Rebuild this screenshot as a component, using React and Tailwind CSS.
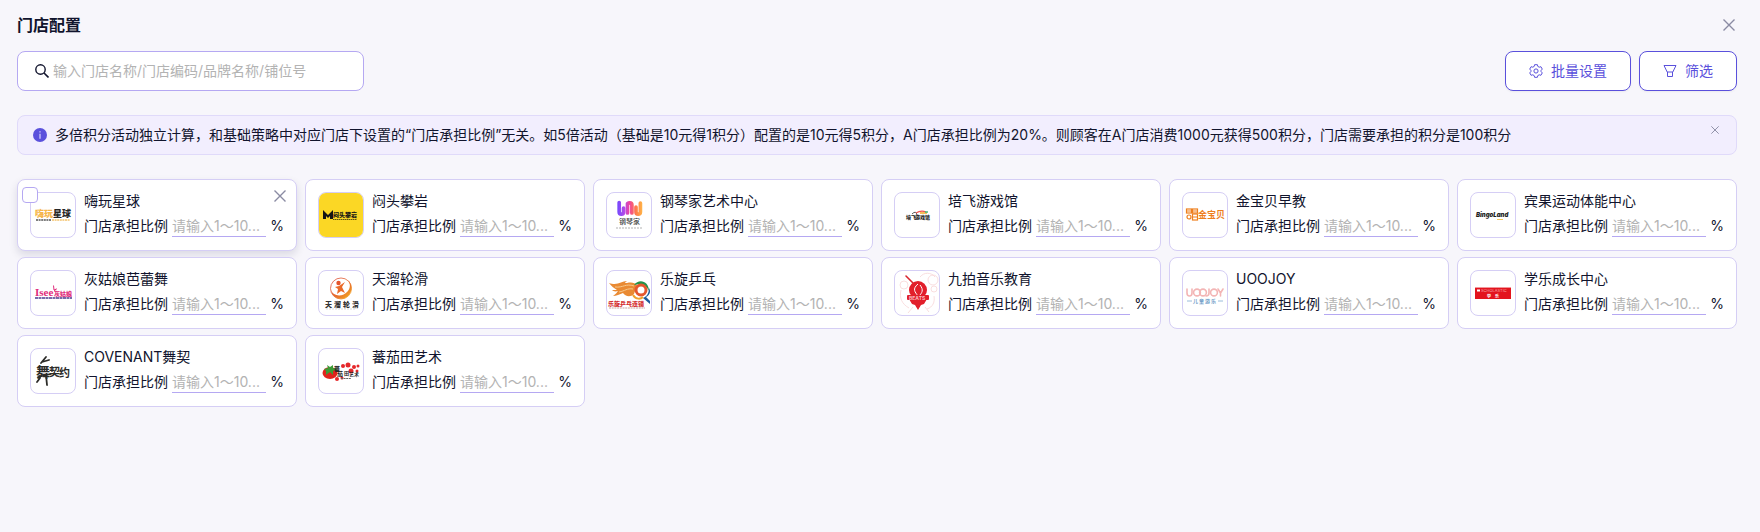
import { useState } from 'react';

const HiPlanetLogo = () => (
  <svg viewBox="0 0 44 44" className="size-full" aria-hidden="true">
    <g fontSize="9" fontWeight="900">
      <text x="4" y="24" fill="#f6b64a">嗨玩</text>
      <text x="22" y="24" fill="#262626">星球</text>
    </g>
    <path d="M5 27h15" stroke="#555" strokeWidth="1.5" strokeDasharray="2 .6" />
    <path d="M21 27h18" stroke="#f3c26b" strokeWidth="1.5" strokeDasharray="2 .6" />
  </svg>
);

const ClimbingLogo = () => (
  <svg viewBox="0 0 44 44" className="size-full bg-[#fbd725]" aria-hidden="true">
    <path d="M4 26V17l5 5 5-5v9h-3v-3l-2 2-2-2v3z" fill="#151515" />
    <text x="14" y="24" fontSize="6" fontWeight="900" fill="#151515">闷头攀岩</text>
    <path d="M14 26.5h24" stroke="#5d5312" strokeWidth="1.2" strokeDasharray="1.5 .5" />
  </svg>
);

const PianoLogo = () => (
  <svg viewBox="0 0 44 44" className="size-full" aria-hidden="true">
    <defs>
      <linearGradient id="piano" x1="10" x2="35" y1="0" y2="0" gradientUnits="userSpaceOnUse">
        <stop offset="0" stopColor="#7048ff" />
        <stop offset=".3" stopColor="#b44be8" />
        <stop offset=".5" stopColor="#f0449b" />
        <stop offset=".75" stopColor="#ff7a4a" />
        <stop offset="1" stopColor="#ffb347" />
      </linearGradient>
    </defs>
    <g fill="none" stroke="url(#piano)" strokeWidth="3.700" strokeLinecap="round">
      <path d="M12.200 9.500v9.500a2 2 0 0 0 4.400 0v-4" />
      <path d="M20.500 20v-9.500M20.500 12a2 2 0 0 1 4.400 0v8" />
      <path d="M29 14v5a2 2 0 0 0 4.400 0v-9" />
    </g>
    <text x="12" y="31" fontSize="7" fontWeight="500" fill="#444">钢琴家</text>
    <path d="M9 35h27" stroke="#ccc" strokeWidth="1.600" strokeDasharray="2 1" />
  </svg>
);

const PeifeiLogo = () => (
  <svg viewBox="0 0 44 44" className="size-full" aria-hidden="true">
    <path d="M17 21q4-4 5 1" fill="none" stroke="#555" />
    <path d="M21 20q5-3 10-1" fill="none" stroke="#ef5350" strokeWidth="1.300" />
    <path d="M25 20h7" stroke="#f5a623" strokeWidth="1.300" />
    <path d="M30 19h3" stroke="#45b97c" strokeWidth="1.300" />
    <text x="11" y="26" fontSize="5" fontWeight="900" fill="#222">培飞</text>
    <text x="20" y="26" fontSize="5" fontWeight="900" fill="#222">游戏馆</text>
  </svg>
);

const GymboreeLogo = () => (
  <svg viewBox="0 0 44 44" className="size-full" aria-hidden="true">
    <g fill="none" stroke="#ee7f1d" strokeWidth="1.200">
      <rect x="3.500" y="16" width="5" height="4" />
      <rect x="9.500" y="16" width="5" height="4" />
      <circle cx="6" cy="24" r="2" />
      <rect x="9.500" y="21" width="5" height="6" />
      <path d="M4 18h11M10 24h4" />
    </g>
    <text x="15" y="25" fontSize="9" fontWeight="700" fill="#ee7f1d">金宝贝</text>
  </svg>
);

const BingoLogo = () => (
  <svg viewBox="0 0 44 44" className="size-full" aria-hidden="true">
    <text x="5" y="24" fontSize="6" fontWeight="900" fontStyle="italic" fill="#1d1d1d">BingoLand</text>
    <path d="M26 26.500h6" stroke="#f4c95b" strokeWidth="1.200" />
  </svg>
);

const CinderellaLogo = () => (
  <svg viewBox="0 0 44 44" className="size-full" aria-hidden="true">
    <text x="4" y="25" fontSize="11" fontWeight="700" fill="#df2d7c" fontFamily="Liberation Serif, serif">Isee</text>
    <path d="M22.500 14.500l.5 4.500 2.500-1-2.500 2" fill="none" stroke="#df2d7c" strokeWidth="1" />
    <text x="23" y="25" fontSize="6" fontWeight="900" fill="#df2d7c">灰姑娘</text>
    <path d="M4 27h37" stroke="#4b3b8f" strokeWidth="1.600" strokeDasharray="3 .5" />
  </svg>
);

const SkatingLogo = () => (
  <svg viewBox="0 0 44 44" className="size-full" aria-hidden="true">
    <defs>
      <linearGradient id="skate" x1="0" x2="1" y1="0" y2="1">
        <stop offset="0" stopColor="#d9463b" />
        <stop offset=".6" stopColor="#e8732c" />
        <stop offset="1" stopColor="#f6b91e" />
      </linearGradient>
    </defs>
    <circle cx="22" cy="17.500" r="10.500" fill="none" stroke="url(#skate)" strokeWidth=".8" />
    <path d="M12 19c2 6 11 8 17 1 3-4 2-8 0-11 4 4 5 10 1 15-6 7-17 4-18-5z" fill="url(#skate)" />
    <circle cx="19.500" cy="12" r="2.200" fill="#e5542b" />
    <path d="M16 16l4-1 6-4-3 5 3 6-4-2-4 3 1-5z" fill="#ea6a29" />
    <text x="6" y="36" fontSize="7" fontWeight="900" fill="#333">天</text>
    <text x="15" y="36" fontSize="7" fontWeight="900" fill="#333">溜</text>
    <text x="24" y="36" fontSize="7" fontWeight="900" fill="#333">轮</text>
    <text x="33" y="36" fontSize="7" fontWeight="900" fill="#333">滑</text>
    <path d="M7 38h30" stroke="#ccc" strokeWidth=".7" strokeDasharray="2 1" />
  </svg>
);

const PingpongLogo = () => (
  <svg viewBox="0 0 44 44" className="size-full" aria-hidden="true">
    <path d="M2 12c9 3 12-2 18-2-3 2-2 2 0 2 5-1 8 0 10 2l-3 9c-4 4-9 2-11-1-3 1-7 3-10 3 3-2 4-4 5-5-3 1-5 0-6-1h5c-3-2-6-4-8-7z" fill="#e98a33" />
    <path d="M8 16c8 1 11-4 19-1M12 21c6-1 8-4 14-3" fill="none" stroke="#f7c98c" strokeWidth="1" />
    <path d="M27 14c5-7 15-4 15 6-3-6-7-8-15-6z" fill="#23924b" />
    <path d="M42 17c0 6-3 9-6 10l7 6v-3l-4-4c4-2 5-6 3-9z" fill="#1d5c9c" />
    <circle cx="34" cy="19" r="5" fill="none" stroke="#e4572e" strokeWidth="3" />
    <circle cx="34" cy="19" r="2.300" fill="#fff" />
    <path d="M26 24c3 5 8 4 10 2" fill="none" stroke="#f0a12c" strokeWidth="2" />
    <text x="1" y="35" fontSize="6" fontWeight="900" fill="#d42f2f">乐旋乒乓连锁</text>
    <path d="M2 37h36" stroke="#c9a5a0" strokeWidth="1.200" strokeDasharray="2 .7" />
  </svg>
);

const BeatsLogo = () => (
  <svg viewBox="0 0 44 44" className="size-full" aria-hidden="true">
    <g fill="none" stroke="#f8d5d7" strokeWidth=".8">
      <circle cx="9" cy="14" r="4" />
      <circle cx="38" cy="9" r="5" />
      <circle cx="39" cy="18" r="3" />
      <path d="M25 6c4-5 11-5 15 0M6 19c-2 8 1 14 8 18M32 38c6-2 8-7 7-13M13 42l5-6M34 41l-4-5" />
    </g>
    <path d="M11 5l8 8" stroke="#d9252e" strokeWidth="1.600" strokeLinecap="round" />
    <circle cx="23" cy="19" r="9" fill="#e21f2b" />
    <path d="M14 28h18l-3 5-3 1-3 5-3-5-3-1z" fill="#e21f2b" />
    <path d="M23 13c-6 5-3 8 0 12M25 14c4 5 2 8-1 11" fill="none" stroke="#fff" strokeWidth="1" />
    <rect x="12" y="24" width="22" height="5" rx="1" fill="#e21f2b" />
    <text x="14" y="29" fontSize="5" fontWeight="700" fill="#f9b9bd">BEATS</text>
  </svg>
);

const UoojoyLogo = () => (
  <svg viewBox="0 0 44 44" className="size-full" aria-hidden="true">
    <g fill="none" stroke="#f3b5b5" strokeWidth="1.600" strokeLinecap="round" strokeLinejoin="round">
      <path d="M4 18v4q0 3 2.500 3T9 22v-4" />
      <circle cx="14" cy="21.500" r="3.400" />
      <circle cx="20" cy="21.500" r="3.400" />
      <path d="M26 18v4q0 3-3 3" />
      <circle cx="31" cy="21.500" r="3.400" />
      <path d="M35 18l2.500 4 2.500-4M37.500 22v3" />
    </g>
    <path d="M4 30h5M35 30h5" stroke="#8fb4d6" strokeWidth=".9" />
    <text x="10" y="32" fontSize="5" fontWeight="700" fill="#6d9bc6">儿</text>
    <text x="16" y="32" fontSize="5" fontWeight="700" fill="#6d9bc6">童</text>
    <text x="22" y="32" fontSize="5" fontWeight="700" fill="#6d9bc6">游</text>
    <text x="28" y="32" fontSize="5" fontWeight="700" fill="#6d9bc6">乐</text>
  </svg>
);

const ScholasticLogo = () => (
  <svg viewBox="0 0 44 44" className="size-full" aria-hidden="true">
    <rect x="4" y="16" width="36" height="12" fill="#e3141e" />
    <path d="M4 16.500h36" stroke="#f3979b" />
    <path d="M6 18.500h3v2H6z" fill="#fff" />
    <text x="10" y="21" fontSize="4" fill="#f6a9ac">SCHOLASTIC</text>
    <text x="16" y="27" fontSize="4" fontWeight="700" fill="#fff">学</text>
    <text x="24" y="27" fontSize="4" fontWeight="700" fill="#fff">乐</text>
  </svg>
);

const CovenantLogo = () => (
  <svg viewBox="0 0 44 44" className="size-full" aria-hidden="true">
    <g fill="none" stroke="#2b2b28" strokeLinecap="round">
      <path d="M15 8l-5 6M11 13l7-2" strokeWidth="1.800" />
      <path d="M7 28l13-3" strokeWidth="1.500" />
      <path d="M15 26l1 10M9 29l-3 4" strokeWidth="1.800" />
    </g>
    <g fill="#2b2b28" fontWeight="700">
      <text x="5" y="28" fontSize="14">舞</text>
      <text x="18" y="27" fontSize="11">契</text>
      <text x="28" y="28" fontSize="11">约</text>
    </g>
  </svg>
);

const TomatoLogo = () => (
  <svg viewBox="0 0 44 44" className="size-full" aria-hidden="true">
    <ellipse cx="11" cy="24" rx="7.500" ry="6" fill="#e0231c" />
    <path d="M5 20l4-1-1-3 3 2 3-2v3l5 1-5 2v4l-3-3-4 3v-4z" fill="#3c9a35" />
    <g fill="#e5282a">
      <circle cx="24" cy="17" r="2" />
      <circle cx="29" cy="16" r="2.500" />
      <circle cx="35" cy="18" r="2" />
      <circle cx="39" cy="17" r="1.500" />
      <circle cx="32" cy="22" r="2.500" />
      <circle cx="38" cy="22" r="1.500" />
      <circle cx="18" cy="30" r="2" />
      <circle cx="23" cy="29" r="1.500" />
    </g>
    <text x="15" y="22" fontSize="6" fontWeight="700" fill="#222">蕃</text>
    <text x="18" y="27" fontSize="6" fontWeight="700" fill="#222">茄</text>
    <text x="25" y="26" fontSize="5" fontWeight="700" fill="#222">田</text>
    <text x="30" y="27" fontSize="5" fontWeight="700" fill="#222">艺术</text>
    <path d="M22 29.500h10" stroke="#666" strokeWidth="1" strokeDasharray="2 .6" />
  </svg>
);

const stores = [
  { id: 1, name: '嗨玩星球', Logo: HiPlanetLogo },
  { id: 2, name: '闷头攀岩', Logo: ClimbingLogo },
  { id: 3, name: '钢琴家艺术中心', Logo: PianoLogo },
  { id: 4, name: '培飞游戏馆', Logo: PeifeiLogo },
  { id: 5, name: '金宝贝早教', Logo: GymboreeLogo },
  { id: 6, name: '宾果运动体能中心', Logo: BingoLogo },
  { id: 7, name: '灰姑娘芭蕾舞', Logo: CinderellaLogo },
  { id: 8, name: '天溜轮滑', Logo: SkatingLogo },
  { id: 9, name: '乐旋乒乓', Logo: PingpongLogo },
  { id: 10, name: '九拍音乐教育', Logo: BeatsLogo },
  { id: 11, name: 'UOOJOY', Logo: UoojoyLogo },
  { id: 12, name: '学乐成长中心', Logo: ScholasticLogo },
  { id: 13, name: 'COVENANT舞契', Logo: CovenantLogo },
  { id: 14, name: '蕃茄田艺术', Logo: TomatoLogo },
];

const CloseIcon = ({ className }) => (
  <svg viewBox="0 0 12 12" className={className} fill="none" stroke="currentColor" aria-hidden="true">
    <path d="M.5.5l11 11M11.500.5l-11 11" strokeWidth="1.400" />
  </svg>
);

const SearchIcon = () => (
  <svg viewBox="0 0 14 14" className="size-3.5 shrink-0" fill="none" stroke="#11142d" aria-hidden="true">
    <circle cx="5.500" cy="5.500" r="4.700" strokeWidth="1.400" />
    <path d="M9 9l4.500 4.500" strokeWidth="1.600" />
  </svg>
);

const GearIcon = () => (
  <svg viewBox="0 0 14 14" className="size-3.5" fill="none" stroke="currentColor" strokeLinejoin="round" aria-hidden="true">
    <path d="M5.600.7h2.800l.4 1.700 1.400.8 1.700-.5 1.400 2.400-1.200 1.200v1.400l1.200 1.200-1.400 2.400-1.700-.5-1.400.8-.4 1.700H5.600l-.4-1.700-1.400-.8-1.700.5L.7 8.900l1.200-1.200V6.300L.7 5.100l1.400-2.400 1.700.5 1.400-.8z" />
    <circle cx="7" cy="7" r="2.100" />
  </svg>
);

const FilterIcon = () => (
  <svg viewBox="0 0 14 14" className="size-3.5" fill="none" stroke="currentColor" strokeLinejoin="round" aria-hidden="true">
    <path d="M1 1.500h12L9.800 8H4.200z" />
    <path d="M4.500 8v4.500h5V8" />
  </svg>
);

const InfoIcon = () => (
  <svg viewBox="0 0 14 14" className="size-3.5 shrink-0" aria-hidden="true">
    <circle cx="7" cy="7" r="7" fill="#5a50dc" />
    <path d="M7 3.200v1.300M7 5.800v5" stroke="#d8d3ff" strokeWidth="1.200" />
  </svg>
);

const StoreCard = ({ store, active }) => {
  const { id, name, Logo } = store;

  return (
    <li
      className={`relative flex rounded-lg border border-[#d5cef5] bg-white p-3 ${
        active ? 'shadow-[0_4px_8px_rgba(20,15,60,0.12)]' : ''
      }`}
    >
      <div className="size-[46px] shrink-0 overflow-hidden rounded-lg border border-[#d5cef5] bg-white">
        <Logo />
      </div>
      <div className="ml-2 min-w-0 flex-1">
        <p className="truncate leading-[18px]">{name}</p>
        <div className="mt-1 flex items-center">
          <label htmlFor={`ratio-${id}`} className="shrink-0">门店承担比例</label>
          <input
            id={`ratio-${id}`}
            type="text"
            placeholder="请输入1～10..."
            className="ml-1 h-[23px] min-w-0 flex-1 border-b border-[#b5a8f2] bg-transparent outline-none placeholder:text-[#b3b3b3]"
          />
          <span className="ml-1">%</span>
        </div>
      </div>
      {active && (
        <>
          <input
            type="checkbox"
            aria-label={name}
            className="absolute top-[7px] left-1 size-4 appearance-none rounded-sm border border-[#b5a8f2] bg-white checked:bg-[#5a50dc]"
          />
          <button type="button" aria-label="移除" className="absolute top-2.5 right-2.5 text-[#8a8ba3]">
            <CloseIcon className="size-3" />
          </button>
        </>
      )}
    </li>
  );
};

const App = () => {
  const [keyword, setKeyword] = useState('');
  const [showTip, setShowTip] = useState(true);

  const visible = stores.filter((store) => store.name.includes(keyword));

  return (
    <main className="min-h-screen bg-[#f7f6fb] pt-3 pr-[23px] pb-6 pl-[17px] font-[Inter,'Noto_Sans_CJK_SC',sans-serif] text-sm text-[#11142d]">
      <header className="flex h-[26px] items-center justify-between">
        <h1 className="text-base font-semibold">门店配置</h1>
        <button type="button" aria-label="关闭" className="mr-0.5 text-[#8a8ba3]">
          <CloseIcon className="size-3" />
        </button>
      </header>

      <div className="mt-[13px] flex items-center justify-between">
        <label className="flex h-10 w-[347px] items-center gap-1 rounded-lg border border-[#b5a8f2] bg-white px-[17px]">
          <SearchIcon />
          <input
            type="text"
            aria-label="搜索门店"
            value={keyword}
            onChange={(e) => setKeyword(e.target.value)}
            placeholder="输入门店名称/门店编码/品牌名称/铺位号"
            className="min-w-0 flex-1 bg-transparent outline-none placeholder:text-[#b3b3b3]"
          />
        </label>
        <div className="flex gap-2 text-[#5a50dc]">
          <button
            type="button"
            className="flex h-10 items-center gap-2 rounded-lg border border-[#5a50dc] bg-white px-[23px] shadow-xs"
          >
            <GearIcon />
            批量设置
          </button>
          <button
            type="button"
            className="flex h-10 items-center gap-2 rounded-lg border border-[#5a50dc] bg-white px-[23px] shadow-xs"
          >
            <FilterIcon />
            筛选
          </button>
        </div>
      </div>

      {showTip && (
        <div className="mt-6 flex min-h-10 items-center rounded-lg border border-[#e0dafa] bg-[#f2eefe] px-[15px]">
          <InfoIcon />
          <p className="ml-2 flex-1">
            多倍积分活动独立计算，和基础策略中对应门店下设置的“门店承担比例”无关。如5倍活动（基础是10元得1积分）配置的是10元得5积分，A门店承担比例为20%。则顾客在A门店消费1000元获得500积分，门店需要承担的积分是100积分
          </p>
          <button
            type="button"
            aria-label="关闭提示"
            onClick={() => setShowTip(false)}
            className="mt-2.5 mr-0.5 self-start text-[#8a8ba3]"
          >
            <CloseIcon className="size-2" />
          </button>
        </div>
      )}

      <ul className="mt-6 grid grid-cols-[repeat(auto-fill,minmax(260px,1fr))] gap-x-2 gap-y-1.5">
        {visible.map((store) => (
          <StoreCard key={store.id} store={store} active={store.id === 1} />
        ))}
      </ul>
    </main>
  );
};

export default App;
